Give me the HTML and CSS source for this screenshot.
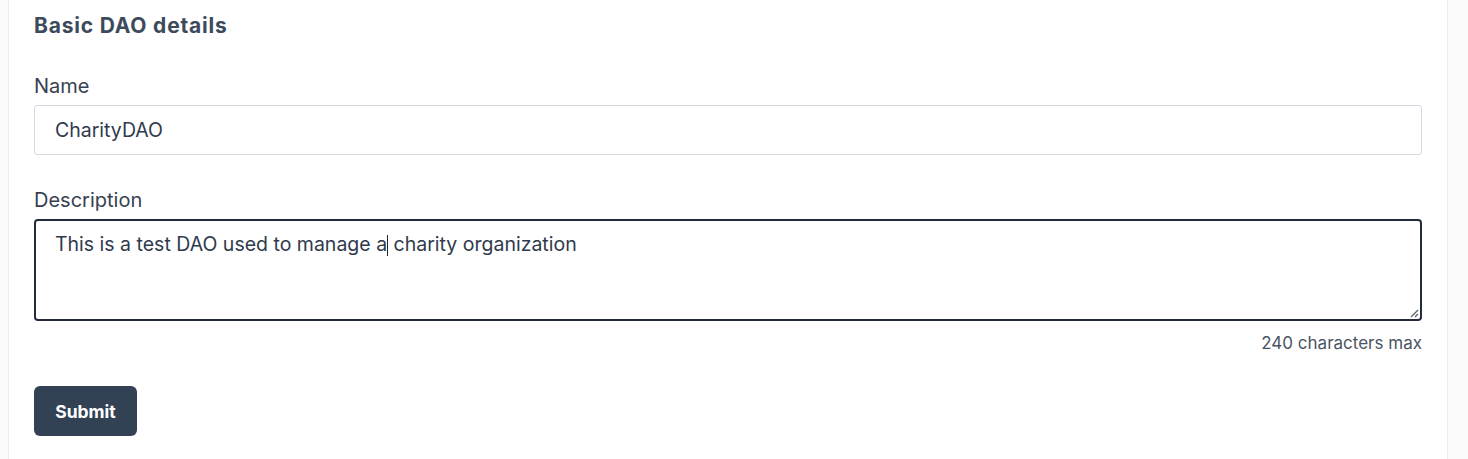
FILE: index.html
```html
<!DOCTYPE html>
<html>
<head>
<meta charset="utf-8">
<link rel="stylesheet" href="styles.css">
</head>
<body>
<div class="card">
  <h2 class="title">Basic DAO details</h2>
  <div class="field">
    <label class="label">Name</label>
    <div class="input">CharityDAO</div>
  </div>
  <div class="field">
    <label class="label">Description</label>
    <div class="textarea">This is a test DAO used to manage a<span class="caret"></span> charity organization
      <svg class="grip" width="11" height="11" viewBox="0 0 11 11"><path d="M10 3 L3 10 M10 7 L7 10" stroke="#5b5f6a" stroke-width="1.2" fill="none"/></svg>
    </div>
    <div class="hint">240 characters max</div>
  </div>
  <button class="submit">Submit</button>
</div>
</body>
</html>
```
FILE: styles.css
```css
html, body { margin: 0; padding: 0; }
body {
  background: #fafafa;
  font-family: "Inter", "Open Sans", sans-serif;
  color: #374151;
  height: 459px;
  overflow: hidden;
}
.card {
  margin-left: 8px;
  width: 1440px;
  background: #fff;
  border-left: 1px solid #ececec;
  border-right: 1px solid #ececec;
  padding: 13px 25px 30px 25px;
  box-sizing: border-box;
  min-height: 459px;
}
.title {
  margin: 0;
  font-size: 21px;
  letter-spacing: 0.8px;
  font-weight: 700;
  color: #3d4a5c;
  line-height: 26px;
}
.label {
  display: block;
  font-size: 20px;
  line-height: 24px;
  color: #374151;
  margin-top: 35px;
  margin-bottom: 7px;
}
.field + .field .label { margin-top: 33px; }
.input {
  height: 50px;
  box-sizing: border-box;
  border: 1px solid #d8d8e2;
  border-radius: 3px;
  padding: 0 20px;
  display: flex;
  align-items: center;
  font-size: 19.5px;
  color: #2f3a4d;
}
.textarea {
  position: relative;
  height: 102px;
  box-sizing: border-box;
  border: 2px solid #232b3d;
  border-radius: 4px;
  padding: 11px 19px;
  font-size: 19.5px;
  line-height: 24px;
  color: #2f3a4d;
}
.caret {
  display: inline-block;
  width: 1px;
  height: 21px;
  background: #222;
  vertical-align: -5px;
}
.grip { position: absolute; right: 1px; bottom: 1px; }
.hint {
  text-align: right;
  font-size: 17px;
  color: #4b5563;
  margin-top: 12px;
  line-height: 20px;
}
.submit {
  margin-top: 33px;
  width: 103px;
  height: 50px;
  background: #334155;
  color: #fff;
  border: none;
  border-radius: 6px;
  font-family: inherit;
  font-weight: 700;
  font-size: 17.5px;
}
```
